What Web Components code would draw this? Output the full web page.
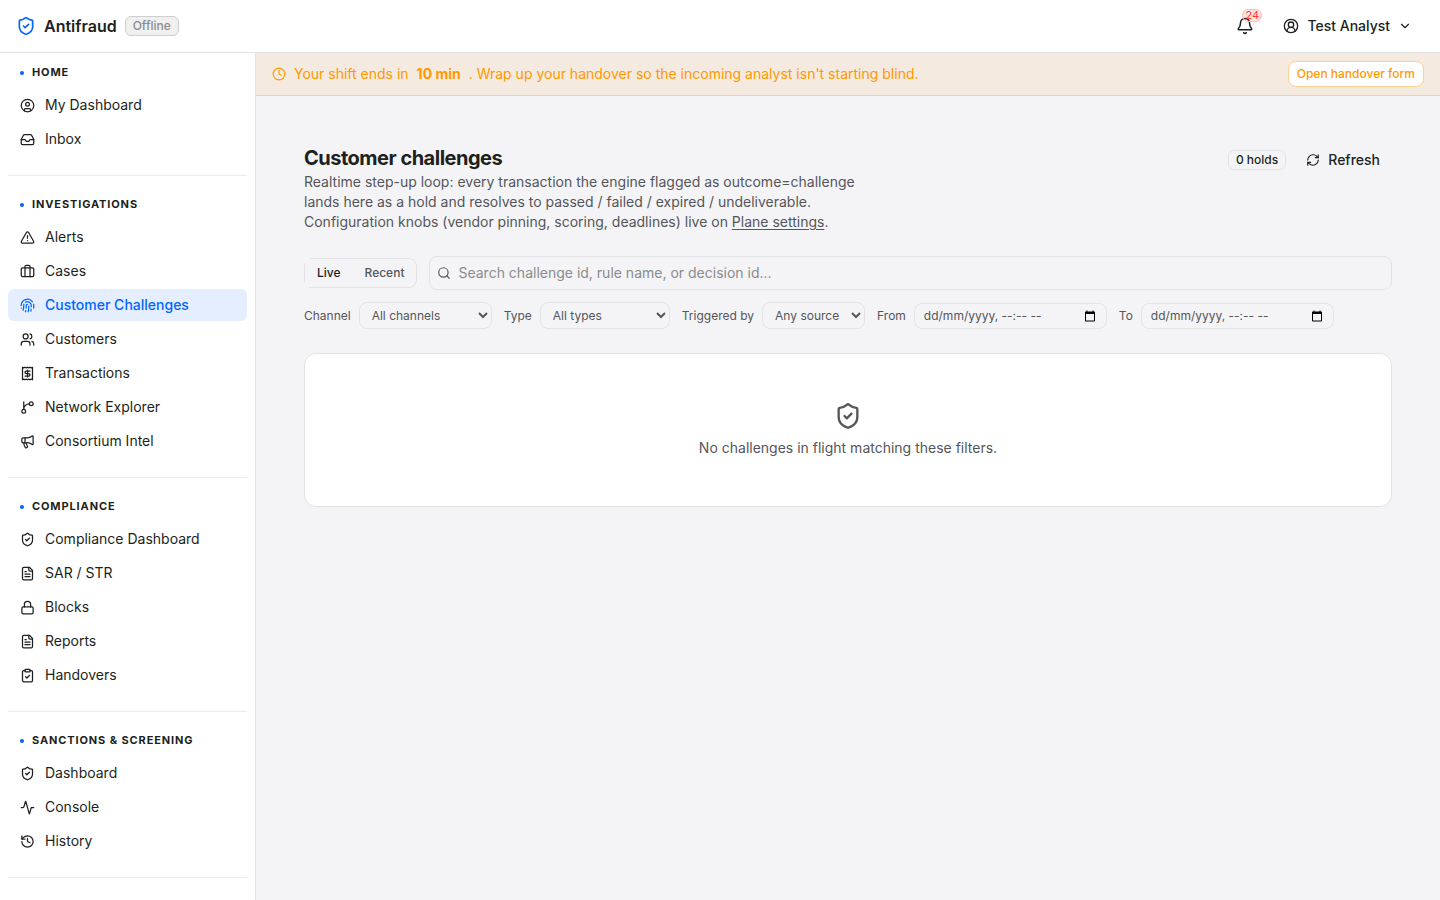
<!DOCTYPE html>
<html lang="en-AU">
<head>
<meta charset="utf-8">
<title>Customer challenges - Antifraud</title>
<style>
  :root {
    --text: #1d1f20;
    --muted: #55565a;
    --faint: #8b8b8d;
    --line: #e2e3e5;
    --surface: #ffffff;
    --canvas: #f4f4f7;
    --primary: #0066ff;
    --primary-soft: #e5eeff;
    --warning: #ff9900;
    --warning-line: #fcd292;
    --warning-soft: #f5eadf;
    --danger: #ff3b30;
  }
  body {
    margin: 0;
    background: var(--canvas);
    color: var(--text);
    font: 14px/20px Inter, "Liberation Sans", sans-serif;
  }
</style>
</head>
<body>
<af-app>
  <af-topbar slot="top"></af-topbar>
  <af-sidebar slot="side">
    <af-nav-section label="Home">
      <af-nav-item icon="profile">My Dashboard</af-nav-item>
      <af-nav-item icon="inbox">Inbox</af-nav-item>
    </af-nav-section>
    <af-nav-section label="Investigations">
      <af-nav-item icon="alert">Alerts</af-nav-item>
      <af-nav-item icon="briefcase">Cases</af-nav-item>
      <af-nav-item icon="fingerprint" active>Customer Challenges</af-nav-item>
      <af-nav-item icon="users">Customers</af-nav-item>
      <af-nav-item icon="receipt">Transactions</af-nav-item>
      <af-nav-item icon="branch">Network Explorer</af-nav-item>
      <af-nav-item icon="megaphone">Consortium Intel</af-nav-item>
    </af-nav-section>
    <af-nav-section label="Compliance">
      <af-nav-item icon="shield">Compliance Dashboard</af-nav-item>
      <af-nav-item icon="file">SAR / STR</af-nav-item>
      <af-nav-item icon="lock">Blocks</af-nav-item>
      <af-nav-item icon="file">Reports</af-nav-item>
      <af-nav-item icon="clipboard">Handovers</af-nav-item>
    </af-nav-section>
    <af-nav-section label="Sanctions &amp; Screening">
      <af-nav-item icon="shield">Dashboard</af-nav-item>
      <af-nav-item icon="activity">Console</af-nav-item>
      <af-nav-item icon="history">History</af-nav-item>
    </af-nav-section>
  </af-sidebar>
  <af-shift-banner>
    <span>Your shift ends in</span>
    <strong>10 min</strong>
    <span>. Wrap up your handover so the incoming analyst isn't starting blind.</span>
  </af-shift-banner>
  <af-challenges></af-challenges>
</af-app>

<script>
// 24x24 outline icons
const ICONS = {
  shield: '<path d="M20 13c0 5-3.5 7.5-7.66 8.95a1 1 0 0 1-.67-.01C7.5 20.5 4 18 4 13V6a1 1 0 0 1 1-1c2 0 4.5-1.2 6.24-2.72a1.17 1.17 0 0 1 1.52 0C14.51 3.81 17 5 19 5a1 1 0 0 1 1 1z"/><path d="m9 12 2 2 4-4"/>',
  user: '<path d="M18 20a6 6 0 0 0-12 0"/><circle cx="12" cy="10" r="4"/><circle cx="12" cy="12" r="10"/>',
  profile: '<circle cx="12" cy="12" r="10"/><circle cx="12" cy="10" r="3"/><path d="M7 20.662V19a2 2 0 0 1 2-2h6a2 2 0 0 1 2 2v1.662"/>',
  inbox: '<path d="M22 12h-6l-2 3h-4l-2-3H2"/><path d="M5.45 5.11 2 12v6a2 2 0 0 0 2 2h16a2 2 0 0 0 2-2v-6l-3.45-6.89A2 2 0 0 0 16.76 4H7.24a2 2 0 0 0-1.79 1.11z"/>',
  alert: '<path d="m21.73 18-8-14a2 2 0 0 0-3.48 0l-8 14A2 2 0 0 0 4 21h16a2 2 0 0 0 1.73-3"/><path d="M12 9v4"/><path d="M12 17h.01"/>',
  briefcase: '<path d="M16 20V4a2 2 0 0 0-2-2h-4a2 2 0 0 0-2 2v16"/><rect width="20" height="14" x="2" y="6" rx="2"/>',
  fingerprint: '<path d="M12 10a2 2 0 0 0-2 2c0 1.02-.1 2.51-.26 4"/><path d="M14 13.12c0 2.38 0 6.38-1 8.88"/><path d="M17.29 21.02c.12-.6.43-2.3.5-3.02"/><path d="M2 12a10 10 0 0 1 18-6"/><path d="M2 16h.01"/><path d="M21.8 16c.2-2 .131-5.354 0-6"/><path d="M5 19.5C5.5 18 6 15 6 12a6 6 0 0 1 .34-2"/><path d="M8.65 22c.21-.66.45-1.32.57-2"/><path d="M9 6.8a6 6 0 0 1 9 5.2v2"/>',
  users: '<path d="M16 21v-2a4 4 0 0 0-4-4H6a4 4 0 0 0-4 4v2"/><circle cx="9" cy="7" r="4"/><path d="M22 21v-2a4 4 0 0 0-3-3.87"/><path d="M16 3.13a4 4 0 0 1 0 7.75"/>',
  receipt: '<path d="M4 2v20l2-1 2 1 2-1 2 1 2-1 2 1 2-1 2 1V2l-2 1-2-1-2 1-2-1-2 1-2-1-2 1Z"/><path d="M16 8h-6a2 2 0 1 0 0 4h4a2 2 0 1 1 0 4H8"/><path d="M12 17.5v-11"/>',
  branch: '<path d="M15 6a9 9 0 0 0-9 9V3"/><circle cx="18" cy="6" r="3"/><circle cx="6" cy="18" r="3"/>',
  megaphone: '<path d="M11 6a13 13 0 0 0 8.4-2.8A1 1 0 0 1 21 4v12a1 1 0 0 1-1.6.8A13 13 0 0 0 11 14H5a2 2 0 0 1-2-2V8a2 2 0 0 1 2-2z"/><path d="M6 14a12 12 0 0 0 2.4 7.2 2 2 0 0 0 3.2-2.4A8 8 0 0 1 10 14"/><path d="M8 6v8"/>',
  file: '<path d="M15 2H6a2 2 0 0 0-2 2v16a2 2 0 0 0 2 2h12a2 2 0 0 0 2-2V7Z"/><path d="M14 2v4a2 2 0 0 0 2 2h4"/><path d="M10 9H8"/><path d="M16 13H8"/><path d="M16 17H8"/>',
  lock: '<rect width="18" height="11" x="3" y="11" rx="2"/><path d="M7 11V7a5 5 0 0 1 10 0v4"/>',
  clipboard: '<rect width="8" height="4" x="8" y="2" rx="1"/><path d="M16 4h2a2 2 0 0 1 2 2v14a2 2 0 0 1-2 2H6a2 2 0 0 1-2-2V6a2 2 0 0 1 2-2h2"/><path d="m9 14 2 2 4-4"/>',
  activity: '<path d="M22 12h-2.48a2 2 0 0 0-1.93 1.46l-2.35 8.36a.25.25 0 0 1-.48 0L9.24 2.18a.25.25 0 0 0-.48 0l-2.35 8.36A2 2 0 0 1 4.49 12H2"/>',
  history: '<path d="M3 12a9 9 0 1 0 9-9 9.75 9.75 0 0 0-6.74 2.74L3 8"/><path d="M3 3v5h5"/><path d="M12 7v5l4 2"/>',
  bell: '<path d="M10.268 21a2 2 0 0 0 3.464 0"/><path d="M3.262 15.326A1 1 0 0 0 4 17h16a1 1 0 0 0 .74-1.673C19.41 13.956 18 12.499 18 8A6 6 0 0 0 6 8c0 4.499-1.411 5.956-2.738 7.326"/>',
  chevron: '<path d="m6 9 6 6 6-6"/>',
  clock: '<circle cx="12" cy="12" r="10"/><path d="M12 6v6l4 2"/>',
  refresh: '<path d="M3 12a9 9 0 0 1 9-9 9.75 9.75 0 0 1 6.74 2.74L21 8"/><path d="M21 3v5h-5"/><path d="M21 12a9 9 0 0 1-9 9 9.75 9.75 0 0 1-6.74-2.74L3 16"/><path d="M8 16H3v5"/>',
  search: '<circle cx="11" cy="11" r="8"/><path d="m21 21-4.34-4.34"/>',
  calendar: '<path fill="currentColor" stroke="none" d="M20 3h-1V1h-2v2H7V1H5v2H4c-1.1 0-2 .9-2 2v16c0 1.1.9 2 2 2h16c1.1 0 2-.9 2-2V5c0-1.1-.9-2-2-2zm0 18H4V8h16v13z"/>'
};

class AfElement extends HTMLElement {
  constructor() {
    super();
    this.attachShadow({ mode: 'open' });
  }

  connectedCallback() {
    const template = document.createElement('template');
    template.innerHTML = this.render();
    this.shadowRoot.replaceChildren(template.content.cloneNode(true));
  }
}

class AfIcon extends AfElement {
  render() {
    const size = this.getAttribute('size') || 16;
    return `
      <style>
        :host { display: inline-flex; flex: none; }
        svg { display: block; }
      </style>
      <svg width="${size}" height="${size}" viewBox="0 0 24 24" fill="none" stroke="currentColor"
        stroke-width="2" stroke-linecap="round" stroke-linejoin="round" aria-hidden="true">
        ${ICONS[this.getAttribute('name')]}
      </svg>
    `;
  }
}

class AfApp extends AfElement {
  render() {
    return `
      <style>
        :host {
          display: grid;
          grid-template: auto minmax(0, 1fr) / 256px minmax(0, 1fr);
          height: 100vh;
        }
        header { grid-column: 1 / -1; }
        aside { min-height: 0; overflow: hidden; }
        main { min-width: 0; overflow: auto; }
      </style>
      <header><slot name="top"></slot></header>
      <aside><slot name="side"></slot></aside>
      <main><slot></slot></main>
    `;
  }
}

class AfTopbar extends AfElement {
  render() {
    return `
      <style>
        :host {
          display: flex;
          align-items: center;
          justify-content: space-between;
          height: 52px;
          padding: 0 16px;
          background: var(--surface);
          border-bottom: 1px solid var(--line);
        }
        .brand, .actions { display: flex; align-items: center; gap: 8px; }
        .brand af-icon { color: var(--primary); }
        .name { font-size: 16px; font-weight: 600; }
        .status {
          padding: 0 7px;
          border: 1px solid #cfcfd0;
          border-radius: 6px;
          background: #f0f0f1;
          color: var(--faint);
          font-size: 12px;
          font-weight: 500;
          line-height: 18px;
        }
        button {
          display: flex;
          align-items: center;
          gap: 8px;
          height: 32px;
          padding: 0 12px;
          border: 0;
          background: none;
          color: inherit;
          font: inherit;
          font-weight: 500;
        }
        .bell { position: relative; padding: 0 9px; }
        .count {
          position: absolute;
          top: -1px;
          left: 15px;
          padding: 0 2px;
          border: 1px solid #ffb9b5;
          border-radius: 8px;
          background: rgba(255, 59, 48, 0.15);
          color: var(--danger);
          font-size: 11px;
          font-weight: 400;
          line-height: 11px;
        }
      </style>
      <div class="brand">
        <af-icon name="shield" size="20"></af-icon>
        <span class="name">Antifraud</span>
        <span class="status">Offline</span>
      </div>
      <div class="actions">
        <button class="bell" aria-label="Notifications">
          <af-icon name="bell" size="18"></af-icon>
          <span class="count">24</span>
        </button>
        <button>
          <af-icon name="user" size="16"></af-icon>
          Test Analyst
          <af-icon name="chevron" size="14"></af-icon>
        </button>
      </div>
    `;
  }
}

class AfSidebar extends AfElement {
  render() {
    return `
      <style>
        :host {
          display: block;
          box-sizing: border-box;
          min-height: 100%;
          padding: 11px 8px 0;
          background: var(--surface);
          border-right: 1px solid var(--line);
        }
      </style>
      <nav aria-label="Main"><slot></slot></nav>
    `;
  }
}

class AfNavSection extends AfElement {
  render() {
    return `
      <style>
        :host {
          display: block;
          margin-bottom: 20px;
          padding-bottom: 20px;
          border-bottom: 1px solid #ececee;
        }
        h2 {
          display: flex;
          align-items: center;
          gap: 8px;
          margin: 0 0 8px;
          padding: 0 12px;
          font-size: 11px;
          font-weight: 700;
          line-height: 17px;
          letter-spacing: 0.08em;
          text-transform: uppercase;
        }
        h2::before {
          content: "";
          width: 4px;
          height: 4px;
          border-radius: 50%;
          background: var(--primary);
        }
        .items { display: flex; flex-direction: column; gap: 2px; }
      </style>
      <h2></h2>
      <div class="items"><slot></slot></div>
    `;
  }

  connectedCallback() {
    super.connectedCallback();
    this.shadowRoot.querySelector('h2').textContent = this.getAttribute('label');
  }
}

class AfNavItem extends AfElement {
  render() {
    return `
      <style>
        :host { display: block; }
        a {
          display: flex;
          align-items: center;
          gap: 10px;
          height: 32px;
          padding: 0 12px;
          border-radius: 6px;
          color: inherit;
          text-decoration: none;
        }
        :host([active]) a {
          background: var(--primary-soft);
          color: var(--primary);
          font-weight: 500;
        }
      </style>
      <a href="#"><af-icon name="${this.getAttribute('icon')}" size="15"></af-icon><slot></slot></a>
    `;
  }
}

class AfShiftBanner extends AfElement {
  render() {
    return `
      <style>
        :host {
          display: flex;
          align-items: center;
          justify-content: space-between;
          padding: 8px 16px;
          background: var(--warning-soft);
          border-bottom: 1px solid var(--warning-line);
          color: var(--warning);
        }
        p { display: flex; align-items: center; gap: 8px; margin: 0; }
        ::slotted(strong) { font-weight: 700; }
        button {
          height: 26px;
          padding: 0 8px;
          border: 1px solid var(--warning-line);
          border-radius: 8px;
          background: var(--surface);
          color: inherit;
          font: 500 12px/16px Inter, sans-serif;
        }
      </style>
      <p><af-icon name="clock" size="14"></af-icon><slot></slot></p>
      <button>Open handover form</button>
    `;
  }
}

class AfChallenges extends AfElement {
  render() {
    return `
      <style>
        :host {
          display: flex;
          flex-direction: column;
          gap: 24px;
          padding: 48px;
        }
        header { display: flex; justify-content: space-between; align-items: flex-start; }
        h1 { margin: 0; font-size: 20px; font-weight: 700; line-height: 28px; letter-spacing: -0.025em; }
        header p { max-width: 576px; margin: 0; color: var(--muted); }
        header a { color: inherit; text-underline-offset: 2px; }
        .tools { display: flex; align-items: center; gap: 8px; }
        .holds {
          padding: 0 7px;
          border: 1px solid var(--line);
          border-radius: 6px;
          font-size: 12px;
          font-weight: 500;
          line-height: 18px;
        }
        .refresh {
          display: flex;
          align-items: center;
          gap: 8px;
          height: 32px;
          padding: 0 12px;
          border: 0;
          background: none;
          color: inherit;
          font: inherit;
          font-weight: 500;
        }
        .controls { display: flex; flex-direction: column; gap: 12px; }
        .row { display: flex; align-items: center; gap: 12px; }
      </style>
      <header>
        <div>
          <h1>Customer challenges</h1>
          <p>Realtime step-up loop: every transaction the engine flagged as outcome=challenge lands here as a hold and resolves to passed / failed / expired / undeliverable. Configuration knobs (vendor pinning, scoring, deadlines) live on <a href="#">Plane settings</a>.</p>
        </div>
        <div class="tools">
          <span class="holds">0 holds</span>
          <button class="refresh"><af-icon name="refresh" size="14"></af-icon>Refresh</button>
        </div>
      </header>
      <div class="controls">
        <div class="row">
          <af-segments></af-segments>
          <af-search></af-search>
        </div>
        <af-filters></af-filters>
      </div>
      <af-empty>No challenges in flight matching these filters.</af-empty>
    `;
  }
}

class AfSegments extends AfElement {
  render() {
    return `
      <style>
        :host {
          display: flex;
          border: 1px solid var(--line);
          border-radius: 8px;
        }
        button {
          height: 28px;
          padding: 0 12px;
          border: 0;
          background: none;
          color: var(--muted);
          font: 500 12px/16px Inter, sans-serif;
        }
        button[aria-pressed="true"] { background: var(--canvas); color: var(--text); }
      </style>
      <button aria-pressed="true">Live</button>
      <button aria-pressed="false">Recent</button>
    `;
  }
}

class AfSearch extends AfElement {
  render() {
    return `
      <style>
        :host { display: block; flex: 1; }
        label {
          display: flex;
          align-items: center;
          gap: 7px;
          height: 32px;
          padding: 0 7px;
          border: 1px solid var(--line);
          border-radius: 8px;
          color: var(--muted);
        }
        input {
          flex: 1;
          min-width: 0;
          padding: 0;
          border: 0;
          outline: 0;
          background: none;
          color: var(--text);
          font: inherit;
        }
        input::placeholder { color: var(--faint); }
      </style>
      <label>
        <af-icon name="search" size="14"></af-icon>
        <input type="search" aria-label="Search challenges" placeholder="Search challenge id, rule name, or decision id...">
      </label>
    `;
  }
}

class AfFilters extends AfElement {
  render() {
    return `
      <style>
        :host {
          display: flex;
          flex-wrap: wrap;
          align-items: center;
          gap: 12px;
          color: var(--muted);
          font-size: 12px;
          line-height: 16px;
        }
        label { display: flex; align-items: center; gap: 8px; }
        select {
          box-sizing: border-box;
          height: 27px;
          padding: 0 8px;
          border: 1px solid var(--line);
          border-radius: 8px;
          background: none;
          color: inherit;
          font: inherit;
        }
        .channel { width: 133px; }
        .type { width: 130px; }
        .source { width: 103px; }
      </style>
      <label>Channel <select class="channel"><option>All channels</option></select></label>
      <label>Type <select class="type"><option>All types</option></select></label>
      <label>Triggered by <select class="source"><option>Any source</option></select></label>
      <af-datetime label="From"></af-datetime>
      <af-datetime label="To"></af-datetime>
    `;
  }
}

class AfDatetime extends AfElement {
  render() {
    return `
      <style>
        :host { display: flex; align-items: center; gap: 8px; }
        .field {
          display: flex;
          align-items: center;
          box-sizing: border-box;
          width: 193px;
          height: 26px;
          padding: 0 10px 0 9px;
          border: 1px solid var(--line);
          border-radius: 8px;
        }
        input {
          flex: 1;
          min-width: 0;
          padding: 0;
          border: 0;
          outline: 0;
          background: none;
          color: inherit;
          font: inherit;
        }
        input::placeholder { color: inherit; opacity: 1; }
        button { display: flex; padding: 0; border: 0; background: none; color: #000; }
      </style>
      <label for="value">${this.getAttribute('label')}</label>
      <div class="field">
        <input id="value" type="text" placeholder="dd/mm/yyyy, --:-- --">
        <button aria-label="Pick a date"><af-icon name="calendar" size="12"></af-icon></button>
      </div>
    `;
  }
}

class AfEmpty extends AfElement {
  render() {
    return `
      <style>
        :host {
          display: flex;
          flex-direction: column;
          align-items: center;
          gap: 8px;
          padding: 48px;
          border: 1px solid var(--line);
          border-radius: 12px;
          background: var(--surface);
          color: var(--muted);
        }
      </style>
      <af-icon name="shield" size="28"></af-icon>
      <span><slot></slot></span>
    `;
  }
}

customElements.define('af-icon', AfIcon);
customElements.define('af-app', AfApp);
customElements.define('af-topbar', AfTopbar);
customElements.define('af-sidebar', AfSidebar);
customElements.define('af-nav-section', AfNavSection);
customElements.define('af-nav-item', AfNavItem);
customElements.define('af-shift-banner', AfShiftBanner);
customElements.define('af-challenges', AfChallenges);
customElements.define('af-segments', AfSegments);
customElements.define('af-search', AfSearch);
customElements.define('af-filters', AfFilters);
customElements.define('af-datetime', AfDatetime);
customElements.define('af-empty', AfEmpty);
</script>
</body>
</html>
